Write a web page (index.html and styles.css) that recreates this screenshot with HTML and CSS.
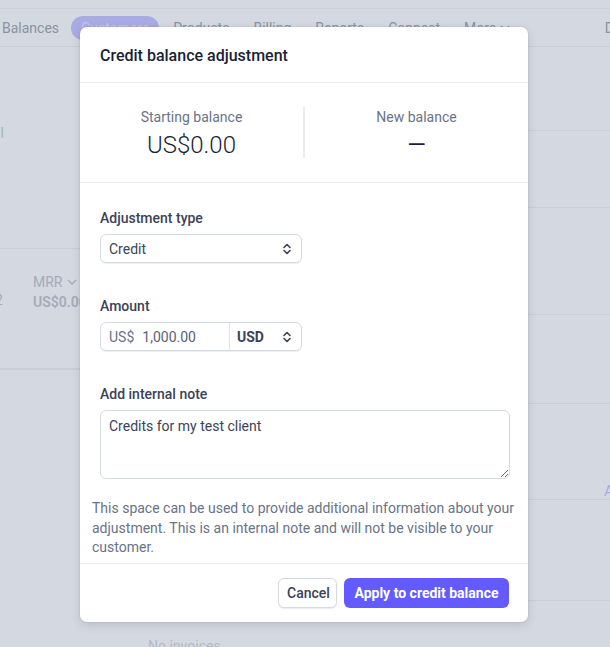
FILE: index.html
```html
<!DOCTYPE html>
<html>
<head>
<meta charset="utf-8">
<link rel="stylesheet" href="styles.css">
</head>
<body>
<div class="page">
  <div class="topline"></div>
  <nav class="nav">
    <span class="nav-item first">Balances</span>
    <span class="nav-item pill">Customers</span>
    <span class="nav-item">Products</span>
    <span class="nav-item">Billing</span>
    <span class="nav-item">Reports</span>
    <span class="nav-item">Connect</span>
    <span class="nav-item more">More <svg width="10" height="8" viewBox="0 0 10 8"><path d="M1 2l4 4 4-4" fill="none" stroke="#8a92a3" stroke-width="1.3"/></svg></span>
    <span class="nav-spacer"></span>
    <span class="nav-item last">D</span>
  </nav>
  <div class="content">
    <div class="col-left">
      <div class="lrow lrow1"><span class="green">il</span></div>
      <div class="lrow lrow2">
        <span class="num">2</span>
        <div class="mrr">
          <div class="mrr-label">MRR <svg width="10" height="8" viewBox="0 0 10 8"><path d="M1 2l4 4 4-4" fill="none" stroke="#a3abba" stroke-width="1.3"/></svg></div>
          <div class="mrr-val">US$0.00</div>
        </div>
      </div>
      <div class="lrow lrow3"></div>
    </div>
    <div class="col-mid">
      <div class="no-inv">No invoices</div>
    </div>
    <div class="col-right">
      <div class="rrow r1"></div>
      <div class="rrow r2"></div>
      <div class="rrow r3"></div>
      <div class="rrow r4"></div>
      <div class="rrow r5"><span class="link">A</span></div>
      <div class="rrow r6"></div>
    </div>
  </div>
</div>

<div class="modal">
  <div class="modal-header">Credit balance adjustment</div>
  <div class="balances">
    <div class="bal">
      <div class="bal-label">Starting balance</div>
      <div class="bal-value">US$0.00</div>
    </div>
    <div class="bal-divider"></div>
    <div class="bal">
      <div class="bal-label">New balance</div>
      <div class="bal-value dash">—</div>
    </div>
  </div>
  <div class="modal-body">
    <div class="field">
      <div class="label">Adjustment type</div>
      <div class="select">
        <span>Credit</span>
        <svg class="chev" width="10" height="14" viewBox="0 0 10 14"><path d="M2 5.5l3-3 3 3M2 8.5l3 3 3-3" fill="none" stroke="#3c4257" stroke-width="1.6" stroke-linecap="round" stroke-linejoin="round"/></svg>
      </div>
    </div>
    <div class="field">
      <div class="label">Amount</div>
      <div class="amount">
        <div class="amount-input"><span class="prefix">US$</span><span class="amt">1,000.00</span></div>
        <div class="currency">
          <span>USD</span>
          <svg class="chev" width="10" height="14" viewBox="0 0 10 14"><path d="M2 5.5l3-3 3 3M2 8.5l3 3 3-3" fill="none" stroke="#3c4257" stroke-width="1.6" stroke-linecap="round" stroke-linejoin="round"/></svg>
        </div>
      </div>
    </div>
    <div class="field note-field">
      <div class="label">Add internal note</div>
      <textarea class="note">Credits for my test client</textarea>
    </div>
    <p class="help">This space can be used to provide additional information about your adjustment. This is an internal note and will not be visible to your customer.</p>
  </div>
  <div class="modal-footer">
    <button class="btn cancel">Cancel</button>
    <button class="btn primary">Apply to credit balance</button>
  </div>
</div>
</body>
</html>
```

FILE: styles.css
```css
* { box-sizing: border-box; }
html, body { margin: 0; padding: 0; }
body {
  width: 610px;
  height: 647px;
  overflow: hidden;
  background: #d4d9e1;
  font-family: Roboto, "Noto Sans", sans-serif;
  font-size: 14px;
  color: #3c4257;
  position: relative;
}
.page { width: 610px; height: 647px; }
.topline { height: 9px; border-bottom: 1px solid #cbd0d9; }
.nav {
  display: flex;
  align-items: center;
  height: 38px;
  border-bottom: 1px solid #c9ced7;
  color: #8a92a3;
  font-size: 14px;
}
.nav-item { padding: 0 12px; white-space: nowrap; }
.nav-item.first { padding: 0 12px 0 2px; }
.nav-item.pill {
  background: #a9abe3;
  color: #c3c5ef;
  border-radius: 13px;
  height: 24px;
  line-height: 24px;
  padding: 0 10px;
  margin-right: 2px;
}
.nav-item.more { display: flex; align-items: center; gap: 4px; }
.nav-spacer { flex: 1; }
.nav-item.last { padding: 0; margin-right: -4px; }
.content { display: flex; }
.col-left { width: 80px; flex: none; }
.lrow { border-bottom: 1px solid #c9ced7; }
.lrow1 { height: 202px; padding-top: 78px; }
.green { color: #a3bca8; font-size: 14px; margin-left: -3px; }
.lrow2 { height: 120px; display: flex; padding-top: 23px; color: #a3abba; }
.num { flex: none; width: 33px; padding-top: 20px; margin-left: -5px; }
.mrr { flex: none; margin-left: 5px; white-space: nowrap; }
.mrr-label { line-height: 20px; display: flex; align-items: center; gap: 5px; }
.mrr-val { font-weight: 600; line-height: 20px; }
.col-mid { width: 448px; flex: none; }
.no-inv { margin-top: 591px; margin-left: 68px; color: #b3bac7; }
.col-right { flex: 1; }
.rrow { border-bottom: 1px solid #c9ced7; }
.r1 { height: 84px; }
.r2 { height: 77px; }
.r3 { height: 107px; }
.r4 { height: 89px; }
.r5 { height: 96px; position: relative; }
.r6 { height: 101px; }
.link { position: absolute; left: 76px; top: 78px; color: #a9abe3; font-size: 15px; }

.modal {
  position: absolute;
  left: 80px;
  top: 27px;
  width: 448px;
  background: #fff;
  border-radius: 7px;
  box-shadow: 0 3px 10px rgba(60, 66, 87, 0.18), 0 0 0 1px rgba(60,66,87,0.05);
  color: #1a1f36;
}
.modal-header {
  height: 56px;
  padding: 19px 20px 0;
  font-size: 16px;
  line-height: 20px;
  font-weight: 500;
  border-bottom: 1px solid #ebeef1;
  color: #1a1f36;
}
.balances {
  display: flex;
  align-items: center;
  height: 100px;
  border-bottom: 1px solid #ebeef1;
}
.bal { flex: 1; text-align: center; }
.bal-label { color: #697386; font-size: 14px; line-height: 18px; margin-top: 2px; }
.bal-value { font-size: 24px; line-height: 30px; color: #1a1f36; margin-top: 4px; font-weight: 300; }
.bal-value.dash { font-weight: 400; }
.bal-divider { width: 2px; height: 51px; background: #ebeef1; flex: none; }
.modal-body { padding: 25px 20px 5px; }
.field { margin-bottom: 33px; }
.field.note-field { margin-bottom: 20px; }
.label { font-weight: 500; line-height: 20px; color: #3c4257; margin-bottom: 6px; }
.select, .amount {
  width: 202px;
  height: 29px;
  border-radius: 6px;
  border: 1px solid #d5d9e0;
  box-shadow: 0 1px 1px rgba(0,0,0,0.07);
  display: flex;
  align-items: center;
  color: #3c4257;
}
.select { justify-content: space-between; padding: 0 9px 0 8px; }
.chev { display: block; }
.amount-input { width: 129px; height: 100%; display: flex; align-items: center; padding-left: 8px; border-right: 1px solid #dfe2e7; color: #697386; }
.prefix { margin-right: 8px; }
.amt { color: #5a6275; }
.currency { flex: 1; display: flex; justify-content: space-between; align-items: center; padding: 0 9px 0 7px; font-weight: 700; color: #3c4257; }
.note {
  display: block;
  width: 410px;
  height: 69px;
  margin: 0;
  padding: 6px 8px;
  border: 1px solid #d5d9e0;
  border-radius: 6px;
  font-family: inherit;
  font-size: 14px;
  color: #3c4257;
  line-height: 18px;
  outline: none;
  resize: vertical;
}
.help {
  margin: 0 -8px;
  color: #697386;
  line-height: 19.5px;
  font-size: 14px;
}
.modal-footer {
  border-top: 1px solid #ebeef1;
  height: 59px;
  display: flex;
  justify-content: flex-end;
  align-items: center;
  gap: 7px;
  padding: 0 19px 0 0;
}
.btn {
  height: 30px;
  border-radius: 6px;
  font-family: inherit;
  font-size: 14px;
  padding: 0 8px;
  white-space: nowrap;
  cursor: pointer;
}
.cancel {
  background: #fff;
  border: 1px solid #d5d9e0;
  box-shadow: 0 1px 1px rgba(0,0,0,0.08);
  color: #3c4257;
  font-weight: 500;
  width: 59px;
}
.primary {
  background: #635bff;
  border: none;
  color: #fff;
  font-weight: 700;
  width: 165px;
}
```
